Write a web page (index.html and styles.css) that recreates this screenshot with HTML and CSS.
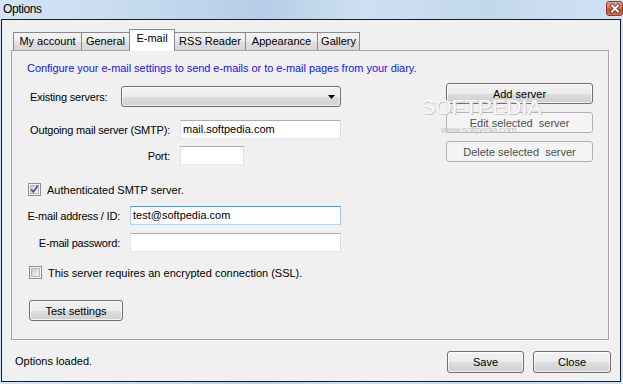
FILE: index.html
```html
<!DOCTYPE html>
<html lang="en">
<head>
    <meta charset="UTF-8">
    <title>Options</title>
    <link rel="stylesheet" href="styles.css">
</head>
<body>
    <div class="window">
        <div class="titlebar">
            <span class="title">Options</span>
            <span class="close-btn">
                <svg width="14" height="13" viewBox="0 0 14 13">
                    <path d="M4 3.5 L10 9.5 M10 3.5 L4 9.5" stroke="#5a2a20" stroke-width="3.6" stroke-linecap="square"/>
                    <path d="M4 3.5 L10 9.5 M10 3.5 L4 9.5" stroke="#fff" stroke-width="2" stroke-linecap="square"/>
                </svg>
            </span>
        </div>

        <div class="frame">
            <div class="tabs">
                <div class="tab tab-account">My account</div>
                <div class="tab tab-general">General</div>
                <div class="tab tab-email active">E-mail</div>
                <div class="tab tab-rss">RSS Reader</div>
                <div class="tab tab-look">Appearance</div>
                <div class="tab tab-gallery">Gallery</div>
            </div>

            <div class="panel">
                <p class="intro">Configure your e-mail settings to send e-mails or to e-mail pages from your diary.</p>

                <div class="panel-body">
                    <div class="form">
                        <div class="row row-servers">
                            <label class="lbl-servers">Existing servers:</label>
                            <div class="combo">
                                <svg class="combo-arrow" width="7" height="4" viewBox="0 0 7 4"><path d="M0 0 H7 L3.5 4 Z" fill="#000"/></svg>
                            </div>
                        </div>
                        <div class="row row-smtp">
                            <label class="lbl lbl-wide">Outgoing mail server (SMTP):</label>
                            <div class="field field-smtp">mail.softpedia.com</div>
                        </div>
                        <div class="row row-port">
                            <label class="lbl lbl-wide">Port:</label>
                            <div class="field field-port"></div>
                        </div>
                        <div class="row row-auth check-row">
                            <svg class="check" width="13" height="13" viewBox="0 0 13 13">
                                <defs>
                                    <linearGradient id="cbfill" x1="0" y1="0" x2="1" y2="1">
                                        <stop offset="0" stop-color="#c6cad0"/>
                                        <stop offset="1" stop-color="#f7f7f7"/>
                                    </linearGradient>
                                </defs>
                                <rect x="0.5" y="0.5" width="12" height="12" fill="#f6f6f6" stroke="#8e8f8f"/>
                                <rect x="2.5" y="2.5" width="8" height="8" fill="url(#cbfill)" stroke="#b3b6bb"/>
                                <path d="M3.2 6.3 L5.4 8.8 L9.8 2.8" stroke="#4a5c93" stroke-width="1.8" fill="none"/>
                            </svg>
                            <span>Authenticated SMTP server.</span>
                        </div>
                        <div class="row row-mail">
                            <label class="lbl lbl-mid">E-mail address / ID:</label>
                            <div class="field field-mail focus">test@softpedia.com</div>
                        </div>
                        <div class="row row-pass">
                            <label class="lbl lbl-mid">E-mail password:</label>
                            <div class="field field-mail"></div>
                        </div>
                        <div class="row row-ssl check-row">
                            <svg class="check" width="13" height="13" viewBox="0 0 13 13">
                                <rect x="0.5" y="0.5" width="12" height="12" fill="#f6f6f6" stroke="#8e8f8f"/>
                                <rect x="2.5" y="2.5" width="8" height="8" fill="url(#cbfill)" stroke="#b3b6bb"/>
                            </svg>
                            <span>This server requires an encrypted connection (SSL).</span>
                        </div>
                        <div class="row row-test">
                            <button class="btn btn-test">Test settings</button>
                        </div>
                    </div>

                    <div class="side">
                        <button class="btn btn-side">Add server</button>
                        <button class="btn btn-side disabled">Edit selected&nbsp; server</button>
                        <button class="btn btn-side disabled">Delete selected&nbsp; server</button>
                    </div>
                </div>

                <div class="watermark">
                    <div class="wm-big">SOFTPEDIA</div>
                    <div class="wm-small">www.softpedia.com</div>
                </div>
            </div>

            <div class="footer">
                <span class="status">Options loaded.</span>
                <button class="btn btn-foot btn-save">Save</button>
                <button class="btn btn-foot btn-close">Close</button>
            </div>
        </div>
    </div>
</body>
</html>
```

FILE: styles.css
```css
* {
    box-sizing: border-box;
}
html, body {
    margin: 0;
}
body {
    width: 623px;
    height: 384px;
    overflow: hidden;
    font-family: "Liberation Sans", Arial, sans-serif;
    font-size: 11px;
    color: #000;
    background: linear-gradient(90deg, #d4e4f4 0%, #c4d8ee 25%, #b7cde7 42%, #cde0f2 58%, #c3d7ed 78%, #d2e2f3 100%);
}
.window {
    height: 384px;
    display: flex;
    flex-direction: column;
    padding: 0 2px 2px 1px;
}

/* title bar */
.titlebar {
    height: 19px;
    display: flex;
    align-items: center;
    justify-content: space-between;
    padding-left: 2px;
}
.title {
    font-size: 12px;
    letter-spacing: -0.4px;
    margin-top: -1px;
}
.close-btn {
    width: 17px;
    height: 15px;
    margin-top: -3px;
    margin-right: -2px;
    border: 1px solid #8d3b2b;
    border-radius: 3px;
    background: linear-gradient(#eaa08a 0%, #dc7a62 45%, #c9502f 55%, #d8704f 100%);
    display: flex;
    align-items: center;
    justify-content: center;
}

/* client area */
.frame {
    flex: 1;
    border: 1px solid #1c1c1c;
    background: #f0f0f0;
    padding: 9px 9px 0 9px;
    display: flex;
    flex-direction: column;
}

/* tabs */
.tabs {
    height: 21px;
    display: flex;
    align-items: flex-end;
    padding-left: 2px;
}
.tab {
    height: 18px;
    line-height: 17px;
    text-align: center;
    white-space: nowrap;
    border: 1px solid #8a8a8a;
    border-bottom: 0;
    background: linear-gradient(#f4f4f4 0%, #ebebeb 50%, #dedede 55%, #d6d6d6 100%);
    margin-left: -1px;
}
.tab:first-child {
    margin-left: 0;
}
.tab.active {
    height: 22px;
    line-height: 17px;
    margin-bottom: -1px;
    background: #fff;
    position: relative;
    z-index: 2;
}
.tab-account { width: 69px; }
.tab-general { width: 49px; }
.tab-email   { width: 46px; }
.tab-rss     { width: 72px; }
.tab-look    { width: 73px; }
.tab-gallery { width: 43px; }

/* panel */
.panel {
    position: relative;
    height: 290px;
    margin-right: 2px;
    border: 1px solid #a3a3a3;
    background: #f0f0f0;
    box-shadow: 1px 1px 0 #fff;
    padding: 11px 15px 0 15px;
}
.intro {
    margin: 0;
    height: 13px;
    line-height: 13px;
    color: #1515ee;
    letter-spacing: -0.05px;
}
.panel-body {
    display: flex;
    justify-content: space-between;
}
.form {
    padding-top: 11px;
}
.row {
    display: flex;
    align-items: center;
    white-space: nowrap;
}
.row label {
    flex: none;
    letter-spacing: -0.2px;
}
.lbl {
    display: flex;
    justify-content: flex-end;
    margin-right: 10px;
}
.lbl-servers {
    width: 91px;
    margin-left: 3px;
}
.lbl-wide {
    width: 143px;
}
.lbl-mid {
    width: 93px;
}
.row-smtp { margin-top: 13px; }
.row-port { margin-top: 7px; }
.row-auth { margin-top: 18px; }
.row-mail { margin-top: 10px; }
.row-pass { margin-top: 8px; }
.row-ssl  { margin-top: 14px; }
.row-test { margin-top: 21px; }

.check-row {
    height: 13px;
}
.check {
    flex: none;
    margin-right: 6px;
}
.row-auth .check { margin-left: 1px; }
.row-ssl .check  { margin-left: 2px; }

.combo {
    width: 220px;
    height: 21px;
    border: 1px solid #707070;
    border-radius: 3px;
    background: linear-gradient(#f2f2f2 0%, #ebebeb 50%, #dddddd 51%, #cfcfcf 100%);
    box-shadow: inset 0 0 0 1px rgba(255, 255, 255, 0.6);
    display: flex;
    align-items: center;
    justify-content: flex-end;
    padding-right: 5px;
}
.field {
    height: 19px;
    line-height: 17px;
    border: 1px solid;
    border-color: #abadb3 #dbdfe6 #e3e9ef #e2e3ea;
    background: #fff;
    padding: 0 2px;
}
.field.focus {
    border-color: #5b9bd1 #9fc6e7 #b3d4ee #a9cbe8;
}
.field-smtp { width: 161px; }
.field-port { width: 64px; }
.field-mail { width: 211px; }

/* buttons */
.btn {
    font: inherit;
    color: #000;
    height: 21px;
    padding: 0;
    white-space: nowrap;
    border: 1px solid #707070;
    border-radius: 3px;
    background: linear-gradient(#f2f2f2 0%, #ebebeb 50%, #dddddd 51%, #cfcfcf 100%);
    box-shadow: inset 0 0 0 1px rgba(255, 255, 255, 0.7);
}
.btn.disabled {
    border-color: #adb2b5;
    background: #f4f4f4;
    color: #4e4e4e;
    box-shadow: none;
}
.btn-test {
    width: 94px;
    margin-left: 2px;
}
.side {
    width: 147px;
    padding-top: 8px;
    display: flex;
    flex-direction: column;
    gap: 8px;
}
.btn-side {
    width: 147px;
}

/* watermark */
.watermark {
    position: absolute;
    left: 409px;
    top: 45px;
    pointer-events: none;
}
.wm-big {
    font-size: 21px;
    line-height: 21px;
    color: #fafafa;
    text-shadow: 1px 1px 0 #c9c9c9, -1px 0 0 #dedede;
    letter-spacing: 0.2px;
}
.wm-small {
    margin-top: 7px;
    margin-left: 20px;
    font-size: 9.5px;
    letter-spacing: -0.4px;
    color: #c4c4c4;
}

/* bottom bar */
.footer {
    flex: 1;
    display: flex;
    align-items: flex-start;
    padding: 11px 0 0 4px;
}
.status {
    flex: 1;
    margin-top: 3px;
    line-height: 14px;
}
.btn-foot {
    height: 22px;
}
.btn-save {
    width: 77px;
    margin-right: 9px;
}
.btn-close {
    width: 78px;
}
```
